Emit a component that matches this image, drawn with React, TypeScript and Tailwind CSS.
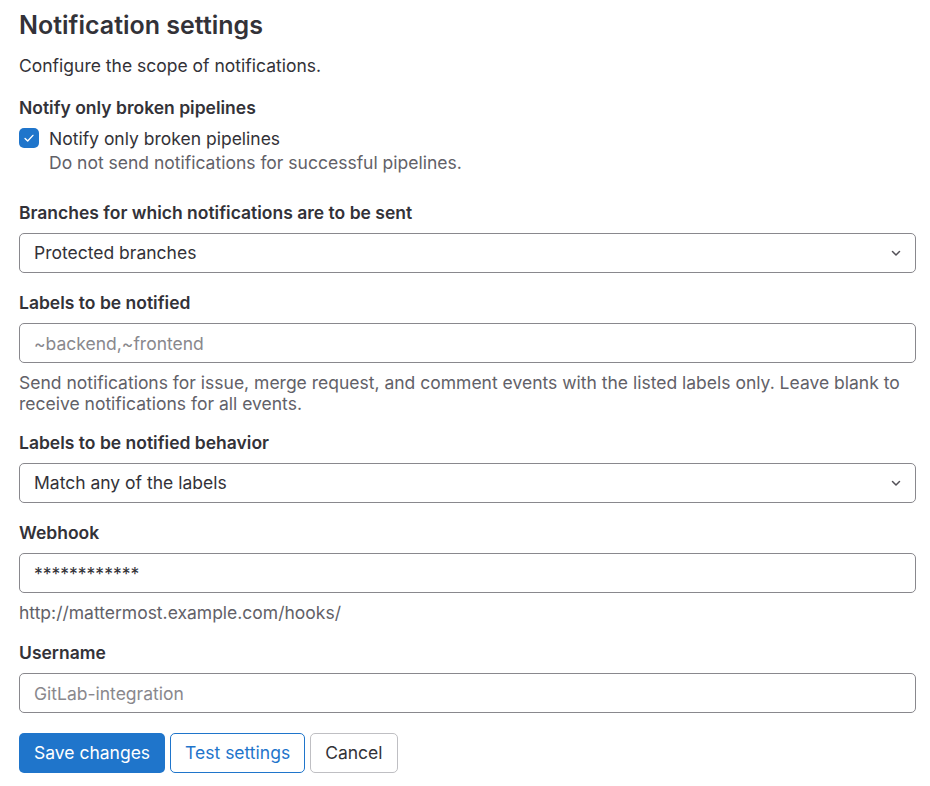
import React, { useState } from 'react';

const font = { fontFamily: 'Inter, "Noto Sans", sans-serif' };

function Chevron() {
  return (
    <svg className="pointer-events-none absolute right-[12px] top-1/2 h-4 w-4 -translate-y-1/2 text-[#535158]" viewBox="0 0 16 16" fill="none">
      <path d="M4.5 6.5 8 10l3.5-3.5" stroke="currentColor" strokeWidth="1.5" strokeLinecap="round" strokeLinejoin="round" />
    </svg>
  );
}

function Label({ children, htmlFor }: { children: React.ReactNode; htmlFor?: string }) {
  return (
    <label htmlFor={htmlFor} className="mb-[9px] block text-[17.5px] font-semibold leading-[22px] text-[#333238]">
      {children}
    </label>
  );
}

const inputClass =
  'block h-10 w-full rounded-[5px] border border-[#89888d] bg-white px-[14px] text-[17.5px] text-[#333238] placeholder-[#89888d] outline-none';

export default function App() {
  const [brokenOnly, setBrokenOnly] = useState(true);

  return (
    <div className="min-h-screen bg-white pl-[19px] pr-[14px] pt-[10px] text-[17.5px] text-[#333238]" style={font}>
      <h2 className="text-[25px] font-semibold leading-[30px] text-[#333238]">Notification settings</h2>
      <p className="mt-[15px] leading-[22px]">Configure the scope of notifications.</p>

      {/* Broken pipelines */}
      <div className="mt-[20px]">
        <div className="mb-[9px] font-semibold leading-[22px]">Notify only broken pipelines</div>
        <label className="flex cursor-pointer items-start gap-[10px]">
          <span
            onClick={() => setBrokenOnly(!brokenOnly)}
            className={`flex h-[20px] w-[20px] shrink-0 items-center justify-center rounded-[5px] ${
              brokenOnly ? 'bg-[#1f75cb]' : 'border border-[#89888d] bg-white'
            }`}
          >
            {brokenOnly && (
              <svg viewBox="0 0 16 16" className="h-[14px] w-[14px]" fill="none">
                <path d="M3.5 8.5 6.5 11.5 12.5 5" stroke="white" strokeWidth="1.6" strokeLinecap="round" strokeLinejoin="round" />
              </svg>
            )}
          </span>
          <span>
            <span className="block leading-[22px]">Notify only broken pipelines</span>
            <span className="mt-[2px] block leading-[22px] text-[#626168]">
              Do not send notifications for successful pipelines.
            </span>
          </span>
        </label>
      </div>

      {/* Branches */}
      <div className="mt-[28px]">
        <Label htmlFor="branches">Branches for which notifications are to be sent</Label>
        <div className="relative">
          <select id="branches" className={`${inputClass} appearance-none`} defaultValue="protected">
            <option value="all">All branches</option>
            <option value="default">Default branch</option>
            <option value="protected">Protected branches</option>
            <option value="default_and_protected">Default branch and protected branches</option>
          </select>
          <Chevron />
        </div>
      </div>

      {/* Labels */}
      <div className="mt-[19px]">
        <Label htmlFor="labels">Labels to be notified</Label>
        <input id="labels" className={inputClass} placeholder="~backend,~frontend" />
        <p className="mt-[9px] leading-[21px] text-[#626168]">
          Send notifications for issue, merge request, and comment events with the listed labels only. Leave blank to
          receive notifications for all events.
        </p>
      </div>

      <div className="mt-[18px]">
        <Label htmlFor="labels-behavior">Labels to be notified behavior</Label>
        <div className="relative">
          <select id="labels-behavior" className={`${inputClass} appearance-none`} defaultValue="any">
            <option value="any">Match any of the labels</option>
            <option value="all">Match all of the labels</option>
          </select>
          <Chevron />
        </div>
      </div>

      {/* Webhook */}
      <div className="mt-[19px]">
        <Label htmlFor="webhook">Webhook</Label>
        <input id="webhook" className={inputClass} defaultValue="************" />
        <p className="mt-[9px] leading-[21px] text-[#626168]">http://mattermost.example.com/hooks/</p>
      </div>

      {/* Username */}
      <div className="mt-[19px]">
        <Label htmlFor="username">Username</Label>
        <input id="username" className={inputClass} placeholder="GitLab-integration" />
      </div>

      <div className="mt-[20px] flex gap-[5px]">
        <button className="h-10 rounded-[5px] bg-[#1f75cb] px-[15px] text-white">Save changes</button>
        <button className="h-10 rounded-[5px] border border-[#1f75cb] bg-white px-[14px] text-[#1f75cb]">
          Test settings
        </button>
        <button className="h-10 rounded-[5px] border border-[#bfbfc3] bg-white px-[14px] text-[#333238]">
          Cancel
        </button>
      </div>
    </div>
  );
}
